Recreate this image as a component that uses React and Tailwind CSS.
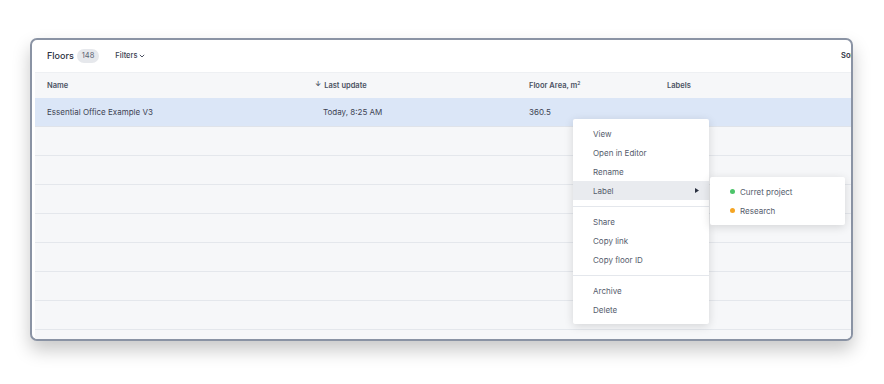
import React from "react";

const rows = Array.from({ length: 7 });

function MenuItem({ children, active, arrow }) {
  return (
    <div
      className={`h-[19px] flex items-center pl-[20px] pr-[10px] text-[8px] text-[#555c6c] ${
        active ? "bg-[#e9ebef]" : ""
      }`}
    >
      <span className="flex-1">{children}</span>
      {arrow && (
        <svg width="4" height="5" viewBox="0 0 4 5">
          <path d="M0 0 L4 2.5 L0 5 Z" fill="#2b3141" />
        </svg>
      )}
    </div>
  );
}

function Sep() {
  return <div className="mt-[6px] mb-[5px] h-[1px] bg-[#e4e7ec]" />;
}

export default function App() {
  return (
    <div
      className="relative w-[884px] h-[384px] bg-white overflow-hidden"
      style={{ fontFamily: "Inter, 'Noto Sans', sans-serif" }}
    >
      <div className="absolute left-[30px] top-[38px] w-[823px] h-[303px] border-2 border-[#8a93a4] rounded-[7px] overflow-hidden bg-white shadow-[0_9px_18px_rgba(0,0,0,0.22)]">
        <div className="w-[900px]">
          {/* header */}
          <div className="h-[32px] flex items-center pl-[15px] w-[819px] relative">
            <span className="text-[9px] font-medium text-[#2b3141]">Floors</span>
            <span className="ml-[3px] h-[14px] px-[5px] rounded-full bg-[#e6e8ec] text-[7.5px] text-[#5c6373] flex items-center">
              148
            </span>
            <span className="ml-[16px] text-[7.5px] font-medium text-[#3a4050] flex items-center gap-[2px]">
              Filters
              <svg width="6" height="4" viewBox="0 0 6 4">
                <path d="M0.8 0.8 L3 3 L5.2 0.8" stroke="#3a4050" strokeWidth="0.9" fill="none" />
              </svg>
            </span>
            <span className="absolute left-[809px] text-[7.5px] font-semibold text-[#2b3141] whitespace-nowrap">
              Sort
            </span>
          </div>
          {/* table */}
          <div className="ml-[3px] bg-[#f6f7f9] h-[267px]">
            <div className="h-[26px] flex items-center text-[7.5px] font-semibold text-[#4a5262] border-t border-[#eef0f3]">
              <div className="w-[268px] pl-[12px]">Name</div>
              <div className="w-[214px] pl-[12px] flex items-center gap-[3px]">
                <span className="text-[7px]">↓</span>
                <span>Last update</span>
              </div>
              <div className="w-[138px] pl-[12px]">
                Floor Area, m<sup className="text-[5px]">2</sup>
              </div>
              <div className="pl-[12px]">Labels</div>
            </div>
            <div className="h-[29px] flex items-center bg-[#dbe6f7] border-b border-[#dfe3ea] text-[8px] text-[#3e4454]">
              <div className="w-[268px] pl-[12px]">Essential Office Example V3</div>
              <div className="w-[214px] pl-[20px]">Today, 8:25 AM</div>
              <div className="w-[138px] pl-[12px]">360.5</div>
            </div>
            {rows.map((_, i) => (
              <div key={i} className="h-[29px] border-b border-[#e4e7ec]" />
            ))}
          </div>
        </div>
      </div>

      {/* context menu */}
      <div className="absolute left-[573px] top-[119px] w-[136px] h-[205px] bg-white rounded-[2px] shadow-[0_2px_10px_rgba(0,0,0,0.14)] py-[5px]">
        <MenuItem>View</MenuItem>
        <MenuItem>Open in Editor</MenuItem>
        <MenuItem>Rename</MenuItem>
        <MenuItem active arrow>
          Label
        </MenuItem>
        <Sep />
        <MenuItem>Share</MenuItem>
        <MenuItem>Copy link</MenuItem>
        <MenuItem>Copy floor ID</MenuItem>
        <Sep />
        <MenuItem>Archive</MenuItem>
        <MenuItem>Delete</MenuItem>
      </div>

      {/* submenu */}
      <div className="absolute left-[710px] top-[177px] w-[135px] h-[48px] bg-white rounded-[2px] shadow-[0_2px_10px_rgba(0,0,0,0.14)] py-[5px]">
        <div className="h-[19px] flex items-center pl-[20px] text-[8px] text-[#555c6c]">
          <span className="w-[5px] h-[5px] rounded-full bg-[#4cc46a] mr-[5px]" />
          Curret project
        </div>
        <div className="h-[19px] flex items-center pl-[20px] text-[8px] text-[#555c6c]">
          <span className="w-[5px] h-[5px] rounded-full bg-[#f5a524] mr-[5px]" />
          Research
        </div>
      </div>
    </div>
  );
}
